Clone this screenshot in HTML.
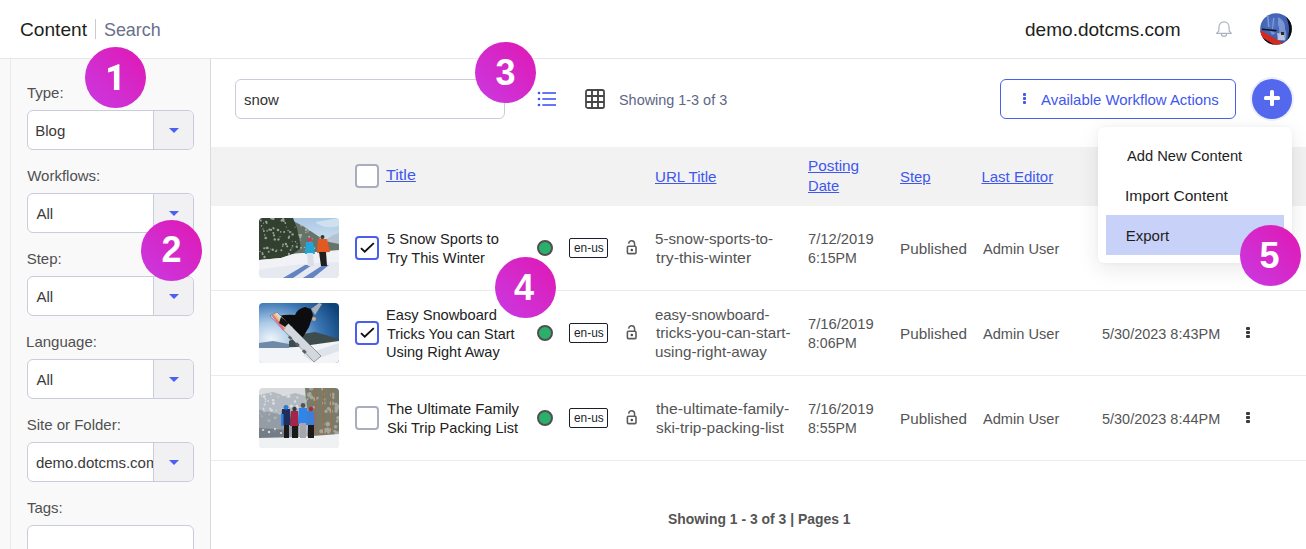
<!DOCTYPE html>
<html><head><meta charset="utf-8"><style>
html,body{margin:0;padding:0;}
body{width:1306px;height:549px;overflow:hidden;position:relative;background:#fff;font-family:"Liberation Sans", sans-serif;}
.t{position:absolute;white-space:nowrap;transform-origin:0 0;}
svg{display:block}
.bd{position:absolute;width:61px;height:61px;border-radius:50%;background:linear-gradient(45deg,#c93ae2 0%,#e018b3 100%);color:#fff;font-weight:bold;font-size:36px;line-height:61px;text-align:center}
.bd span{display:block;position:relative}
</style></head><body>
<div style="position:absolute;left:0px;top:0px;width:1306px;height:58px;background:#fff"></div>
<div style="position:absolute;left:0px;top:58px;width:1306px;height:1px;background:#e6e7ec"></div>
<div class="t" style="left:19.69px;top:17.22px;font-size:19px;line-height:25px;color:#1e1e20;transform:scaleX(1.0065);">Content</div>
<div style="position:absolute;left:95px;top:19px;width:1px;height:20px;background:#c9cbd3"></div>
<div class="t" style="left:103.78px;top:17.22px;font-size:19px;line-height:25px;color:#68708a;transform:scaleX(0.9411);">Search</div>
<div class="t" style="left:1024.65px;top:16.52px;font-size:19px;line-height:25px;color:#1e1e20;transform:scaleX(1.0023);">demo.dotcms.com</div>
<svg style="position:absolute;left:1214px;top:20px" width="20" height="19" viewBox="0 0 20 19">
<path d="M2.6 13.4 L4.9 10.8 V7.6 C4.9 4.1 7.1 1.9 10 1.9 C12.9 1.9 15.1 4.1 15.1 7.6 V10.8 L17.4 13.4 Z" fill="none" stroke="#aeb3c3" stroke-width="1.2" stroke-linejoin="round"/>
<path d="M7.4 13.8 A2.6 2.6 0 0 0 12.6 13.8" fill="none" stroke="#aeb3c3" stroke-width="1.2"/>
</svg>
<svg style="position:absolute;left:1260px;top:13px" width="32" height="32" viewBox="0 0 32 32">
<defs><clipPath id="av"><circle cx="16" cy="16" r="15.8"/></clipPath>
<radialGradient id="avg" cx="0.4" cy="0.35" r="0.8"><stop offset="0" stop-color="#5274c4"/><stop offset=".7" stop-color="#3a5aaa"/><stop offset="1" stop-color="#2a4488"/></radialGradient></defs>
<g clip-path="url(#av)">
<rect width="32" height="32" fill="url(#avg)"/>
<g fill="#a9bde6" opacity=".55"><path d="M7 3 L8.5 3 L9.5 14 L8 14Z"/><path d="M13 5 L14.5 5 L13 16 L12 16Z"/><path d="M10 18 L16 20 L12 22Z"/></g>
<path d="M18 4 Q26 8 25 16 Q28 22 25 28 L17 27 Q21 19 18 11Z" fill="#9fb4e2" opacity=".6"/>
<path d="M17 20 L24 21 L25 27 L18 27Z" fill="#c9d2e2" opacity=".8"/>
<path d="M21 19 L24 19 L24 22 L21 22Z" fill="#2a2a2a"/>
<path d="M2 15.5 L17 17 L16 18.5 L2 17Z" fill="#121212"/>
<path d="M0 17 L23 30 L21 33 L16 33 L0 23Z" fill="#d52a1b"/>
<path d="M0 23 L16 33 L0 33Z" fill="#160808"/>
<path d="M24 0 Q33 14 26 32 L32 32 L32 0Z" fill="#0b0b0e"/>
</g>
</svg>
<div style="position:absolute;left:0px;top:59px;width:10px;height:490px;background:#f9f9f9"></div>
<div style="position:absolute;left:10px;top:59px;width:1px;height:490px;background:#eaeaec"></div>
<div style="position:absolute;left:11px;top:59px;width:199px;height:490px;background:#f9f9fa"></div>
<div style="position:absolute;left:210px;top:59px;width:1px;height:490px;background:#d9dbe3"></div>
<div class="t" style="left:26.93px;top:82.80px;font-size:15px;line-height:20px;color:#505050;">Type:</div>
<div style="position:absolute;left:27px;top:110px;width:167px;height:40px;box-sizing:border-box;border:1px solid #c9ccda;border-radius:6px;background:#fff;overflow:hidden"><div style="position:absolute;left:125px;top:0;width:41px;height:38px;background:#f1f1f3;border-left:1px solid #c9ccda"></div><div style="position:absolute;left:141px;top:17px;width:0;height:0;border-left:5px solid transparent;border-right:5px solid transparent;border-top:5px solid #4c5ff0"></div></div>
<div class="t" style="left:35.25px;top:120.80px;font-size:15px;line-height:20px;color:#3a3a3a;">Blog</div>
<div class="t" style="left:27.18px;top:165.80px;font-size:15px;line-height:20px;color:#505050;">Workflows:</div>
<div style="position:absolute;left:27px;top:193px;width:167px;height:40px;box-sizing:border-box;border:1px solid #c9ccda;border-radius:6px;background:#fff;overflow:hidden"><div style="position:absolute;left:125px;top:0;width:41px;height:38px;background:#f1f1f3;border-left:1px solid #c9ccda"></div><div style="position:absolute;left:141px;top:17px;width:0;height:0;border-left:5px solid transparent;border-right:5px solid transparent;border-top:5px solid #4c5ff0"></div></div>
<div class="t" style="left:36.50px;top:203.80px;font-size:15px;line-height:20px;color:#3a3a3a;">All</div>
<div class="t" style="left:26.68px;top:248.80px;font-size:15px;line-height:20px;color:#505050;">Step:</div>
<div style="position:absolute;left:27px;top:276px;width:167px;height:40px;box-sizing:border-box;border:1px solid #c9ccda;border-radius:6px;background:#fff;overflow:hidden"><div style="position:absolute;left:125px;top:0;width:41px;height:38px;background:#f1f1f3;border-left:1px solid #c9ccda"></div><div style="position:absolute;left:141px;top:17px;width:0;height:0;border-left:5px solid transparent;border-right:5px solid transparent;border-top:5px solid #4c5ff0"></div></div>
<div class="t" style="left:36.50px;top:286.80px;font-size:15px;line-height:20px;color:#3a3a3a;">All</div>
<div class="t" style="left:26.05px;top:331.80px;font-size:15px;line-height:20px;color:#505050;">Language:</div>
<div style="position:absolute;left:27px;top:359px;width:167px;height:40px;box-sizing:border-box;border:1px solid #c9ccda;border-radius:6px;background:#fff;overflow:hidden"><div style="position:absolute;left:125px;top:0;width:41px;height:38px;background:#f1f1f3;border-left:1px solid #c9ccda"></div><div style="position:absolute;left:141px;top:17px;width:0;height:0;border-left:5px solid transparent;border-right:5px solid transparent;border-top:5px solid #4c5ff0"></div></div>
<div class="t" style="left:36.50px;top:369.80px;font-size:15px;line-height:20px;color:#3a3a3a;">All</div>
<div class="t" style="left:26.68px;top:414.80px;font-size:15px;line-height:20px;color:#505050;">Site or Folder:</div>
<div style="position:absolute;left:27px;top:442px;width:167px;height:40px;box-sizing:border-box;border:1px solid #c9ccda;border-radius:6px;background:#fff;overflow:hidden"><div style="position:absolute;left:125px;top:0;width:41px;height:38px;background:#f1f1f3;border-left:1px solid #c9ccda"></div><div style="position:absolute;left:141px;top:17px;width:0;height:0;border-left:5px solid transparent;border-right:5px solid transparent;border-top:5px solid #4c5ff0"></div></div>
<div style="position:absolute;left:28px;top:443px;width:125px;height:38px;overflow:hidden">
<div class="t" style="left:7.88px;top:9.80px;font-size:15px;line-height:20px;color:#3a3a3a;">demo.dotcms.com</div>
</div>
<div class="t" style="left:26.93px;top:497.80px;font-size:15px;line-height:20px;color:#505050;">Tags:</div>
<div style="position:absolute;left:27px;top:525px;width:167px;height:40px;box-sizing:border-box;border:1px solid #c9ccda;border-radius:6px;background:#fff"></div>
<div style="position:absolute;left:235px;top:79px;width:270px;height:40px;box-sizing:border-box;border:1px solid #c9ccda;border-radius:6px;background:#fff"></div>
<div class="t" style="left:243.93px;top:90.00px;font-size:15px;line-height:20px;color:#333;transform:scaleX(0.9964);">snow</div>
<svg style="position:absolute;left:536px;top:90px" width="22" height="18" viewBox="0 0 22 18">
<g fill="#3d58ef"><circle cx="3" cy="3" r="1.35"/><circle cx="3" cy="9" r="1.35"/><circle cx="3" cy="15" r="1.35"/>
<rect x="6.3" y="2.2" width="13.7" height="1.6"/><rect x="6.3" y="8.2" width="13.7" height="1.6"/><rect x="6.3" y="14.2" width="13.7" height="1.6"/></g></svg>
<svg style="position:absolute;left:584px;top:88px" width="22" height="22" viewBox="0 0 22 22">
<rect x="2" y="2" width="18" height="18" rx="1.8" fill="none" stroke="#474747" stroke-width="1.8"/>
<path d="M8 2V20M14 2V20M2 8H20M2 14H20" stroke="#474747" stroke-width="1.9"/></svg>
<div class="t" style="left:619.00px;top:89.70px;font-size:15px;line-height:20px;color:#5d6684;transform:scaleX(0.9607);">Showing 1-3 of 3</div>
<div style="position:absolute;left:1000px;top:79px;width:236px;height:40px;box-sizing:border-box;border:1px solid #4a5fef;border-radius:6px;background:#fff"></div>
<div style="position:absolute;left:1023px;top:93px;width:3px;height:3px;background:#3f57ee;border-radius:1px"></div>
<div style="position:absolute;left:1023px;top:97px;width:3px;height:3px;background:#3f57ee;border-radius:1px"></div>
<div style="position:absolute;left:1023px;top:101px;width:3px;height:3px;background:#3f57ee;border-radius:1px"></div>
<div class="t" style="left:1040.80px;top:89.80px;font-size:15px;line-height:20px;color:#3f57ee;transform:scaleX(0.9952);">Available Workflow Actions</div>
<div style="position:absolute;left:1252px;top:79px;width:40px;height:40px;box-sizing:border-box;border-radius:50%;background:#5468ee;box-shadow:0 0 0 2px #eceffd"></div>
<div style="position:absolute;left:1264.2px;top:96px;width:15.7px;height:4.4px;background:#fff;border-radius:1.5px"></div>
<div style="position:absolute;left:1269.8px;top:90.3px;width:4.4px;height:15.7px;background:#fff;border-radius:1.5px"></div>
<div style="position:absolute;left:211px;top:147px;width:1095px;height:59px;background:#f2f2f3"></div>
<div style="position:absolute;left:355px;top:164px;width:24px;height:24px;box-sizing:border-box;border:2px solid #a9aebe;border-radius:4px;background:#fff"></div>
<div class="t" style="left:385.60px;top:164.80px;font-size:15px;line-height:20px;color:#3f57ee;transform:scaleX(1.0753);text-decoration:underline;text-underline-offset:1px;">Title</div>
<div class="t" style="left:654.67px;top:166.80px;font-size:15px;line-height:20px;color:#3f57ee;transform:scaleX(1.0055);text-decoration:underline;text-underline-offset:1px;">URL Title</div>
<div class="t" style="left:808.12px;top:156.20px;font-size:15px;line-height:20px;color:#3f57ee;transform:scaleX(1.0214);text-decoration:underline;text-underline-offset:1px;">Posting</div>
<div class="t" style="left:808.17px;top:175.50px;font-size:15px;line-height:20px;color:#3f57ee;transform:scaleX(0.9841);text-decoration:underline;text-underline-offset:1px;">Date</div>
<div class="t" style="left:899.78px;top:166.80px;font-size:15px;line-height:20px;color:#3f57ee;transform:scaleX(0.9924);text-decoration:underline;text-underline-offset:1px;">Step</div>
<div class="t" style="left:981.45px;top:166.80px;font-size:15px;line-height:20px;color:#3f57ee;text-decoration:underline;text-underline-offset:1px;">Last Editor</div>
<div style="position:absolute;left:211px;top:290px;width:1095px;height:1px;background:#ebebee"></div>
<div style="position:absolute;left:259px;top:218px;width:80px;height:60px;border-radius:4px;overflow:hidden"><svg width="80" height="60" viewBox="0 0 80 60">
<defs><linearGradient id="s1" x1="0" y1="0" x2="0" y2="1"><stop offset="0" stop-color="#a9c8e5"/><stop offset="1" stop-color="#dfe9f2"/></linearGradient></defs>
<rect width="80" height="60" fill="#eceef2"/>
<rect x="0" y="0" width="80" height="34" fill="url(#s1)"/>
<path d="M80 8 Q66 12 56 4 L80 0Z" fill="#cfe0ee"/>
<path d="M66 22 L74 17 L80 15 L80 32 L62 32Z" fill="#b5c3d0"/>
<path d="M28 0 L36 4 L44 8 L50 12 L56 16 L62 20 L70 24 L80 26 L80 33 L30 36Z" fill="#66746a"/>
<path d="M0 0 H34 L38 10 L40 20 L42 30 L34 36 L22 40 L0 42Z" fill="#33412f"/>
<g fill="#c5cfc6" opacity=".7"><circle cx="19.0" cy="21.8" r="0.8"/><circle cx="48.3" cy="25.0" r="0.6"/><circle cx="1.1" cy="33.5" r="0.7"/><circle cx="38.1" cy="25.6" r="0.6"/><circle cx="41.9" cy="29.7" r="1.0"/><circle cx="5.1" cy="30.3" r="1.0"/><circle cx="24.1" cy="1.2" r="1.2"/><circle cx="37.8" cy="28.8" r="1.2"/><circle cx="31.6" cy="32.0" r="0.9"/><circle cx="7.8" cy="5.4" r="0.7"/><circle cx="50.1" cy="12.0" r="0.9"/><circle cx="30.9" cy="14.0" r="1.0"/><circle cx="72.4" cy="22.8" r="1.1"/><circle cx="16.9" cy="33.3" r="1.0"/><circle cx="22.8" cy="2.5" r="1.2"/><circle cx="12.1" cy="11.8" r="1.1"/><circle cx="24.8" cy="3.1" r="1.0"/><circle cx="2.5" cy="7.9" r="0.8"/><circle cx="3.4" cy="34.7" r="0.8"/><circle cx="30.2" cy="18.4" r="0.9"/><circle cx="51.5" cy="23.8" r="0.9"/><circle cx="40.6" cy="17.2" r="1.1"/><circle cx="19.0" cy="12.0" r="1.3"/><circle cx="41.7" cy="21.9" r="0.5"/><circle cx="33.2" cy="23.2" r="0.5"/><circle cx="49.3" cy="25.3" r="0.5"/><circle cx="50.2" cy="18.7" r="1.0"/><circle cx="28.2" cy="28.3" r="1.1"/><circle cx="1.8" cy="2.4" r="1.0"/><circle cx="36.5" cy="23.7" r="0.8"/><circle cx="29.1" cy="12.5" r="0.8"/><circle cx="47.6" cy="12.0" r="0.8"/><circle cx="45.5" cy="29.4" r="0.7"/><circle cx="17.8" cy="32.2" r="0.7"/><circle cx="15.0" cy="17.4" r="1.1"/><circle cx="8.1" cy="12.9" r="0.8"/><circle cx="26.9" cy="26.0" r="1.2"/><circle cx="36.1" cy="9.0" r="0.6"/><circle cx="42.4" cy="7.6" r="1.1"/><circle cx="22.3" cy="32.3" r="1.0"/><circle cx="10.4" cy="11.7" r="1.1"/><circle cx="21.7" cy="13.9" r="0.8"/><circle cx="33.6" cy="16.4" r="1.2"/><circle cx="12.5" cy="0.2" r="1.3"/><circle cx="53.0" cy="20.8" r="0.7"/><circle cx="27.3" cy="9.1" r="0.6"/><circle cx="47.1" cy="11.5" r="1.1"/><circle cx="3.6" cy="36.1" r="1.1"/><circle cx="72.0" cy="23.1" r="0.5"/><circle cx="24.0" cy="26.5" r="0.9"/><circle cx="49.0" cy="13.7" r="0.7"/><circle cx="15.8" cy="21.4" r="1.2"/><circle cx="13.7" cy="31.7" r="1.2"/><circle cx="64.5" cy="32.9" r="0.5"/><circle cx="4.0" cy="10.9" r="0.7"/><circle cx="42.2" cy="16.9" r="0.9"/><circle cx="4.4" cy="5.1" r="0.6"/><circle cx="5.5" cy="39.0" r="1.2"/><circle cx="6.9" cy="20.1" r="0.8"/><circle cx="25.2" cy="14.1" r="1.0"/><circle cx="46.9" cy="14.4" r="0.7"/><circle cx="26.3" cy="5.0" r="0.9"/><circle cx="57.3" cy="15.2" r="0.6"/><circle cx="14.3" cy="14.9" r="1.0"/><circle cx="64.1" cy="24.9" r="0.8"/><circle cx="29.8" cy="19.8" r="1.1"/><circle cx="33.6" cy="27.8" r="0.9"/><circle cx="19.6" cy="21.4" r="1.1"/><circle cx="5.7" cy="17.0" r="0.8"/><circle cx="29.9" cy="35.9" r="1.1"/><circle cx="21.0" cy="18.6" r="0.6"/><circle cx="65.1" cy="26.5" r="1.2"/><circle cx="63.4" cy="26.7" r="1.1"/><circle cx="11.5" cy="31.0" r="0.5"/><circle cx="7.3" cy="4.0" r="1.2"/><circle cx="14.3" cy="0.9" r="1.2"/><circle cx="9.7" cy="33.8" r="1.0"/><circle cx="46.3" cy="31.9" r="0.5"/><circle cx="61.4" cy="20.5" r="1.1"/><circle cx="8.5" cy="30.0" r="1.2"/><circle cx="4.9" cy="13.0" r="1.0"/><circle cx="14.4" cy="10.0" r="1.0"/><circle cx="60.3" cy="15.7" r="0.8"/><circle cx="31.7" cy="14.0" r="0.8"/><circle cx="6.7" cy="20.0" r="1.3"/><circle cx="33.0" cy="29.9" r="0.6"/><circle cx="55.3" cy="30.2" r="1.0"/><circle cx="41.4" cy="19.3" r="1.0"/><circle cx="7.7" cy="29.9" r="1.2"/><circle cx="41.4" cy="17.7" r="1.1"/><circle cx="14.9" cy="10.7" r="0.7"/><circle cx="46.8" cy="12.6" r="0.7"/><circle cx="23.7" cy="28.2" r="0.8"/><circle cx="68.3" cy="23.4" r="0.7"/></g>
<path d="M0 42 L22 40 L34 36 L80 32 L80 60 L0 60Z" fill="#f0f2f6"/>
<path d="M0 52 Q30 46 80 44 L80 60 L0 60Z" fill="#e6e9ef"/>
<path d="M24 60 L46 47 L53 47 L34 60Z" fill="#6483c2"/>
<path d="M44 60 L64 47 L70 47 L54 60Z" fill="#6483c2"/>
<path d="M47 24 L54 24 L56 36 L46 36Z" fill="#20a7d8"/>
<path d="M48 35 L54 35 L55 48 L49 48Z" fill="#d9dee8"/>
<circle cx="51" cy="21.8" r="2" fill="#d8345a"/>
<path d="M59 21 L68 21 L71 34 L58 35Z" fill="#e25a22"/>
<path d="M60 34 L67 34 L68 48 L62 48Z" fill="#1f1f1f"/>
<circle cx="63.5" cy="19" r="2" fill="#3a3a3a"/>
</svg></div>
<div style="position:absolute;left:355px;top:236px;width:24px;height:24px;box-sizing:border-box;border:2px solid #4a5ff0;border-radius:4px;background:#fff"></div>
<svg style="position:absolute;left:355px;top:236px" width="24" height="24" viewBox="0 0 24 24"><path d="M6 12.1 L9.7 15.6 L18.8 7.1" fill="none" stroke="#111" stroke-width="1.9"/></svg>
<div class="t" style="left:386.79px;top:228.60px;font-size:15px;line-height:20px;color:#222;transform:scaleX(0.9788);">5 Snow Sports to</div>
<div class="t" style="left:387.04px;top:247.50px;font-size:15px;line-height:20px;color:#222;transform:scaleX(0.9716);">Try This Winter</div>
<div style="position:absolute;left:537px;top:240px;width:16px;height:16px;box-sizing:border-box;border-radius:50%;background:#2ab06a;border:2px solid #505050"></div>
<div style="position:absolute;left:569px;top:238px;width:39px;height:20px;box-sizing:border-box;border:1.3px solid #1b1f2b;border-radius:2px;background:#fff"></div>
<div class="t" style="left:574.04px;top:238.80px;font-size:13px;line-height:17px;color:#1b1f2b;transform:scaleX(0.9143);">en-us</div>
<svg style="position:absolute;left:624px;top:239px" width="15" height="18" viewBox="0 0 15 18">
<rect x="3.4" y="7.2" width="8.6" height="7.4" rx="1.1" fill="none" stroke="#5c5c5c" stroke-width="1.6"/>
<path d="M4.6 4.6 C4.9 2.7 6.1 1.7 7.7 1.7 C9.5 1.7 10.6 3 10.6 5 V7.4" fill="none" stroke="#5c5c5c" stroke-width="1.5"/>
<circle cx="7.8" cy="11" r="1.25" fill="#444"/></svg>
<div class="t" style="left:655.37px;top:228.70px;font-size:15px;line-height:20px;color:#545454;transform:scaleX(1.0121);">5-snow-sports-to-</div>
<div class="t" style="left:655.74px;top:247.70px;font-size:15px;line-height:20px;color:#545454;transform:scaleX(1.0581);">try-this-winter</div>
<div class="t" style="left:807.86px;top:229.10px;font-size:15px;line-height:20px;color:#545454;transform:scaleX(0.9854);">7/12/2019</div>
<div class="t" style="left:807.89px;top:248.00px;font-size:15px;line-height:20px;color:#545454;transform:scaleX(0.9447);">6:15PM</div>
<div class="t" style="left:899.53px;top:238.80px;font-size:15px;line-height:20px;color:#545454;transform:scaleX(1.0169);">Published</div>
<div class="t" style="left:982.70px;top:238.80px;font-size:15px;line-height:20px;color:#545454;transform:scaleX(0.9741);">Admin User</div>
<div style="position:absolute;left:211px;top:375px;width:1095px;height:1px;background:#ebebee"></div>
<div style="position:absolute;left:259px;top:303px;width:80px;height:60px;border-radius:4px;overflow:hidden"><svg width="80" height="60" viewBox="0 0 80 60">
<defs><radialGradient id="sk2" cx="0.15" cy="0.6" r="0.95"><stop offset="0" stop-color="#eef4f9"/><stop offset=".3" stop-color="#a9c9e6"/><stop offset=".65" stop-color="#3d78b6"/><stop offset="1" stop-color="#0c4379"/></radialGradient></defs>
<rect width="80" height="60" fill="url(#sk2)"/>
<path d="M30 38 L44 31 L56 29 L70 33 L80 36 L80 44 L30 44Z" fill="#3e4c4e"/>
<path d="M0 40 L14 38 L30 41 L30 46 L0 46Z" fill="#6f8aa6"/>
<path d="M0 45 L30 45 L80 38 L80 60 L0 60Z" fill="#f2f4f7"/>
<path d="M44 52 L80 40 L80 48 L52 58Z" fill="#dfe4ea"/>
<path d="M20 13 Q28 11 36 12 Q38 6 46 4 L52 6 L54 12 L50 24 L44 34 L36 37 L32 32 L34 24 L28 22 L20 21Z" fill="#0d0d10"/>
<path d="M52 6 L60 0 L63 1 L56 12Z" fill="#a8b0ba"/>
<circle cx="55" cy="16" r="2" fill="#d8a880"/>
<path d="M11 13 L18 9 L62 53 L55 59Z" fill="#d3d8df" stroke="#5d6670" stroke-width=".6"/>
<path d="M12.5 12.5 L14.5 11.5 L26 26 L23.5 27.5Z" fill="#e26f96"/>
<path d="M14.5 11.5 L16 11 L27 24.5 L26 26Z" fill="#f2c24a"/>
<g fill="#5a5f66"><rect x="30" y="33" width="2.5" height="4" transform="rotate(-45 31 35)"/><rect x="37" y="40" width="3" height="4" transform="rotate(-45 38 42)"/><rect x="44" y="47" width="3" height="4" transform="rotate(-45 45 49)"/></g>
<path d="M22 14 L30 20 L26 24 L20 20Z" fill="#141416"/>
</svg></div>
<div style="position:absolute;left:355px;top:321px;width:24px;height:24px;box-sizing:border-box;border:2px solid #4a5ff0;border-radius:4px;background:#fff"></div>
<svg style="position:absolute;left:355px;top:321px" width="24" height="24" viewBox="0 0 24 24"><path d="M6 12.1 L9.7 15.6 L18.8 7.1" fill="none" stroke="#111" stroke-width="1.9"/></svg>
<div class="t" style="left:386.18px;top:304.70px;font-size:15px;line-height:20px;color:#222;transform:scaleX(0.9773);">Easy Snowboard</div>
<div class="t" style="left:387.04px;top:323.60px;font-size:15px;line-height:20px;color:#222;transform:scaleX(0.9594);">Tricks You can Start</div>
<div class="t" style="left:386.31px;top:342.20px;font-size:15px;line-height:20px;color:#222;transform:scaleX(0.9696);">Using Right Away</div>
<div style="position:absolute;left:537px;top:325px;width:16px;height:16px;box-sizing:border-box;border-radius:50%;background:#2ab06a;border:2px solid #505050"></div>
<div style="position:absolute;left:569px;top:323px;width:39px;height:20px;box-sizing:border-box;border:1.3px solid #1b1f2b;border-radius:2px;background:#fff"></div>
<div class="t" style="left:574.04px;top:323.80px;font-size:13px;line-height:17px;color:#1b1f2b;transform:scaleX(0.9143);">en-us</div>
<svg style="position:absolute;left:624px;top:324px" width="15" height="18" viewBox="0 0 15 18">
<rect x="3.4" y="7.2" width="8.6" height="7.4" rx="1.1" fill="none" stroke="#5c5c5c" stroke-width="1.6"/>
<path d="M4.6 4.6 C4.9 2.7 6.1 1.7 7.7 1.7 C9.5 1.7 10.6 3 10.6 5 V7.4" fill="none" stroke="#5c5c5c" stroke-width="1.5"/>
<circle cx="7.8" cy="11" r="1.25" fill="#444"/></svg>
<div class="t" style="left:655.38px;top:304.70px;font-size:15px;line-height:20px;color:#545454;transform:scaleX(0.9960);">easy-snowboard-</div>
<div class="t" style="left:655.75px;top:323.30px;font-size:15px;line-height:20px;color:#545454;transform:scaleX(1.0158);">tricks-you-can-start-</div>
<div class="t" style="left:654.98px;top:341.60px;font-size:15px;line-height:20px;color:#545454;transform:scaleX(1.0156);">using-right-away</div>
<div class="t" style="left:807.86px;top:314.10px;font-size:15px;line-height:20px;color:#545454;transform:scaleX(0.9854);">7/16/2019</div>
<div class="t" style="left:808.01px;top:333.00px;font-size:15px;line-height:20px;color:#545454;transform:scaleX(0.9424);">8:06PM</div>
<div class="t" style="left:899.53px;top:323.80px;font-size:15px;line-height:20px;color:#545454;transform:scaleX(1.0169);">Published</div>
<div class="t" style="left:982.70px;top:323.80px;font-size:15px;line-height:20px;color:#545454;transform:scaleX(0.9741);">Admin User</div>
<div class="t" style="left:1102.10px;top:323.80px;font-size:15px;line-height:20px;color:#545454;transform:scaleX(0.9640);">5/30/2023 8:43PM</div>
<div style="position:absolute;left:1246.4px;top:327px;width:3.3px;height:3px;background:#3a3a3a;border-radius:1px"></div>
<div style="position:absolute;left:1246.4px;top:331px;width:3.3px;height:3px;background:#3a3a3a;border-radius:1px"></div>
<div style="position:absolute;left:1246.4px;top:335px;width:3.3px;height:3px;background:#3a3a3a;border-radius:1px"></div>
<div style="position:absolute;left:211px;top:460px;width:1095px;height:1px;background:#ebebee"></div>
<div style="position:absolute;left:259px;top:388px;width:80px;height:60px;border-radius:4px;overflow:hidden"><svg width="80" height="60" viewBox="0 0 80 60">
<rect width="80" height="60" fill="#d9dbdd"/>
<path d="M0 7 L14 4 L26 8 L36 5 L50 9 L80 7 L80 50 L0 50Z" fill="#b3bac1"/>
<g fill="#e4e8eb" opacity=".8"><circle cx="14.2" cy="12.3" r="1.3"/><circle cx="3.2" cy="28.5" r="1.0"/><circle cx="2.6" cy="27.3" r="0.6"/><circle cx="19.1" cy="8.9" r="0.7"/><circle cx="18.7" cy="40.7" r="0.7"/><circle cx="9.8" cy="32.4" r="1.5"/><circle cx="25.4" cy="22.7" r="1.6"/><circle cx="2.0" cy="42.1" r="0.9"/><circle cx="6.3" cy="10.9" r="0.9"/><circle cx="35.9" cy="13.6" r="1.2"/><circle cx="28.1" cy="21.6" r="1.1"/><circle cx="2.8" cy="8.5" r="0.8"/><circle cx="29.9" cy="24.0" r="0.9"/><circle cx="25.8" cy="25.0" r="0.9"/><circle cx="35.0" cy="35.4" r="0.8"/><circle cx="25.3" cy="28.1" r="1.5"/><circle cx="32.1" cy="18.1" r="1.6"/><circle cx="5.2" cy="23.6" r="1.4"/><circle cx="6.7" cy="26.5" r="0.6"/><circle cx="29.4" cy="38.1" r="1.2"/><circle cx="38.5" cy="19.2" r="1.3"/><circle cx="26.2" cy="30.4" r="1.1"/><circle cx="37.0" cy="45.7" r="1.1"/><circle cx="29.2" cy="8.5" r="1.3"/><circle cx="28.5" cy="47.7" r="1.4"/><circle cx="12.5" cy="22.2" r="1.3"/><circle cx="1.0" cy="25.4" r="0.8"/><circle cx="5.2" cy="8.5" r="1.4"/><circle cx="5.7" cy="16.4" r="1.0"/><circle cx="38.3" cy="9.4" r="1.0"/><circle cx="24.2" cy="43.1" r="1.4"/><circle cx="38.0" cy="17.7" r="1.0"/><circle cx="15.8" cy="43.1" r="1.6"/><circle cx="6.6" cy="13.4" r="0.8"/><circle cx="10.3" cy="26.4" r="1.2"/><circle cx="11.6" cy="6.2" r="1.0"/><circle cx="16.2" cy="29.8" r="1.6"/><circle cx="30.4" cy="27.7" r="1.2"/><circle cx="29.8" cy="8.3" r="1.5"/><circle cx="34.3" cy="42.7" r="1.4"/><circle cx="17.3" cy="22.8" r="0.7"/><circle cx="27.9" cy="8.6" r="0.7"/><circle cx="9.2" cy="12.8" r="0.9"/><circle cx="2.3" cy="6.0" r="0.8"/><circle cx="4.5" cy="21.3" r="0.6"/><circle cx="38.5" cy="31.8" r="0.7"/><circle cx="11.1" cy="20.6" r="1.0"/><circle cx="5.4" cy="41.7" r="1.6"/><circle cx="20.5" cy="26.3" r="0.7"/><circle cx="4.5" cy="20.4" r="0.9"/><circle cx="36.5" cy="12.8" r="0.6"/><circle cx="41.8" cy="28.2" r="0.7"/><circle cx="23.9" cy="7.1" r="1.1"/><circle cx="43.1" cy="42.3" r="1.3"/><circle cx="11.5" cy="21.4" r="0.8"/><circle cx="34.0" cy="28.4" r="1.4"/><circle cx="14.5" cy="15.4" r="1.4"/><circle cx="43.3" cy="41.8" r="1.4"/><circle cx="36.0" cy="37.1" r="0.8"/><circle cx="22.8" cy="20.9" r="0.6"/></g>
<path d="M0 22 L20 26 L40 32 L40 50 L0 50Z" fill="#6f7984" opacity=".45"/>
<path d="M0 40 L30 42 L30 50 L0 50Z" fill="#59616a" opacity=".55"/>
<g fill="#e8ebee" opacity=".9"><circle cx="4" cy="42" r="1"/><circle cx="10" cy="44" r="1.2"/><circle cx="16" cy="41" r="1"/><circle cx="22" cy="45" r="1.1"/></g>
<path d="M46 0 L80 0 L80 50 L48 50 L50 30 L47 12Z" fill="#7b7d6c"/>
<g fill="#c6cacb" opacity=".55"><circle cx="46.9" cy="12.9" r="1.4"/><circle cx="69.5" cy="44.0" r="1.7"/><circle cx="77.9" cy="45.4" r="2.4"/><circle cx="58.4" cy="10.1" r="1.3"/><circle cx="52.7" cy="9.4" r="1.9"/><circle cx="76.6" cy="38.7" r="1.7"/><circle cx="68.2" cy="36.8" r="1.1"/><circle cx="68.5" cy="41.8" r="2.2"/><circle cx="71.5" cy="22.0" r="1.3"/><circle cx="72.8" cy="15.3" r="2.2"/><circle cx="79.0" cy="18.2" r="1.6"/><circle cx="78.2" cy="33.3" r="1.3"/><circle cx="50.3" cy="7.0" r="2.4"/><circle cx="73.4" cy="6.7" r="2.2"/><circle cx="79.3" cy="30.2" r="1.5"/><circle cx="64.7" cy="6.0" r="1.0"/><circle cx="79.0" cy="29.9" r="1.8"/><circle cx="77.7" cy="20.0" r="2.3"/><circle cx="74.1" cy="9.7" r="1.4"/><circle cx="56.0" cy="11.1" r="1.9"/><circle cx="54.8" cy="19.3" r="1.2"/><circle cx="76.9" cy="16.3" r="1.7"/><circle cx="65.8" cy="41.6" r="1.6"/><circle cx="77.2" cy="23.1" r="1.8"/><circle cx="63.8" cy="0.9" r="1.7"/><circle cx="52.2" cy="0.2" r="2.2"/><circle cx="51.9" cy="21.8" r="2.1"/><circle cx="64.9" cy="15.0" r="1.8"/><circle cx="64.9" cy="36.1" r="1.2"/><circle cx="65.1" cy="11.4" r="1.4"/><circle cx="72.3" cy="23.4" r="1.8"/><circle cx="71.8" cy="42.0" r="1.7"/><circle cx="66.8" cy="23.3" r="1.8"/><circle cx="69.6" cy="20.8" r="1.8"/><circle cx="62.3" cy="43.3" r="2.0"/><circle cx="75.8" cy="43.3" r="1.4"/><circle cx="65.0" cy="43.4" r="2.3"/><circle cx="50.7" cy="5.6" r="1.7"/><circle cx="48.5" cy="11.1" r="1.1"/><circle cx="68.8" cy="36.1" r="2.3"/></g>
<g fill="#a36a44"><rect x="56" y="0" width="1.4" height="50"/><rect x="64" y="0" width="1.4" height="50"/><rect x="72" y="0" width="1.2" height="46"/></g>
<path d="M0 50 L40 49 L80 46 L80 60 L0 60Z" fill="#eff1f3"/>
<path d="M23 21 L31 21 L32 37 L22 37Z" fill="#1f2f5c"/><rect x="22" y="26" width="2.5" height="12" fill="#2f82e0"/><rect x="25" y="37" width="5" height="13" fill="#1a1a1a"/><circle cx="27" cy="19.3" r="2.4" fill="#2c7bd6"/>
<path d="M32 23 L39 23 L40 38 L31 38Z" fill="#a32648"/><rect x="33" y="38" width="6" height="12" fill="#1a1a1a"/><circle cx="35.5" cy="21" r="2.2" fill="#3b3b3b"/>
<path d="M40 20 L48 20 L50 35 L39 36Z" fill="#2f86e8"/><rect x="41" y="35" width="6" height="15" fill="#a4a8ae"/><circle cx="44" cy="17.5" r="2.4" fill="#555"/>
<path d="M48 23 L55 23 L56 37 L47 37Z" fill="#3c7fd6"/><rect x="49" y="37" width="6" height="13" fill="#1a1a1a"/><circle cx="52" cy="21" r="2.2" fill="#b02a30"/>
</svg></div>
<div style="position:absolute;left:355px;top:406px;width:24px;height:24px;box-sizing:border-box;border:2px solid #a9aebe;border-radius:4px;background:#fff"></div>
<div class="t" style="left:387.03px;top:399.10px;font-size:15px;line-height:20px;color:#222;transform:scaleX(0.9895);">The Ultimate Family</div>
<div class="t" style="left:386.79px;top:417.50px;font-size:15px;line-height:20px;color:#222;transform:scaleX(0.9704);">Ski Trip Packing List</div>
<div style="position:absolute;left:537px;top:410px;width:16px;height:16px;box-sizing:border-box;border-radius:50%;background:#2ab06a;border:2px solid #505050"></div>
<div style="position:absolute;left:569px;top:408px;width:39px;height:20px;box-sizing:border-box;border:1.3px solid #1b1f2b;border-radius:2px;background:#fff"></div>
<div class="t" style="left:574.04px;top:408.80px;font-size:13px;line-height:17px;color:#1b1f2b;transform:scaleX(0.9143);">en-us</div>
<svg style="position:absolute;left:624px;top:409px" width="15" height="18" viewBox="0 0 15 18">
<rect x="3.4" y="7.2" width="8.6" height="7.4" rx="1.1" fill="none" stroke="#5c5c5c" stroke-width="1.6"/>
<path d="M4.6 4.6 C4.9 2.7 6.1 1.7 7.7 1.7 C9.5 1.7 10.6 3 10.6 5 V7.4" fill="none" stroke="#5c5c5c" stroke-width="1.5"/>
<circle cx="7.8" cy="11" r="1.25" fill="#444"/></svg>
<div class="t" style="left:655.74px;top:398.70px;font-size:15px;line-height:20px;color:#545454;transform:scaleX(1.0440);">the-ultimate-family-</div>
<div class="t" style="left:655.61px;top:417.70px;font-size:15px;line-height:20px;color:#545454;transform:scaleX(1.0287);">ski-trip-packing-list</div>
<div class="t" style="left:807.86px;top:399.10px;font-size:15px;line-height:20px;color:#545454;transform:scaleX(0.9854);">7/16/2019</div>
<div class="t" style="left:808.01px;top:418.00px;font-size:15px;line-height:20px;color:#545454;transform:scaleX(0.9424);">8:55PM</div>
<div class="t" style="left:899.53px;top:408.80px;font-size:15px;line-height:20px;color:#545454;transform:scaleX(1.0169);">Published</div>
<div class="t" style="left:982.70px;top:408.80px;font-size:15px;line-height:20px;color:#545454;transform:scaleX(0.9741);">Admin User</div>
<div class="t" style="left:1102.10px;top:408.80px;font-size:15px;line-height:20px;color:#545454;transform:scaleX(0.9640);">5/30/2023 8:44PM</div>
<div style="position:absolute;left:1246.4px;top:412px;width:3.3px;height:3px;background:#3a3a3a;border-radius:1px"></div>
<div style="position:absolute;left:1246.4px;top:416px;width:3.3px;height:3px;background:#3a3a3a;border-radius:1px"></div>
<div style="position:absolute;left:1246.4px;top:420px;width:3.3px;height:3px;background:#3a3a3a;border-radius:1px"></div>
<div class="t" style="left:668.03px;top:509.85px;font-size:14px;line-height:18px;color:#555;font-weight:bold;transform:scaleX(0.9941);">Showing 1 - 3 of 3 | Pages 1</div>
<div style="position:absolute;left:1098px;top:127px;width:194px;height:136px;background:#fff;border-radius:6px;box-shadow:0 6px 22px rgba(0,0,0,.09),0 0 4px rgba(0,0,0,.04)"></div>
<div style="position:absolute;left:1106px;top:215px;width:178px;height:40px;background:#c8d1f7"></div>
<div class="t" style="left:1126.60px;top:145.50px;font-size:15px;line-height:20px;color:#1e1e1e;transform:scaleX(0.9796);">Add New Content</div>
<div class="t" style="left:1125.17px;top:185.60px;font-size:15px;line-height:20px;color:#1e1e1e;transform:scaleX(1.0373);">Import Content</div>
<div class="t" style="left:1125.75px;top:225.80px;font-size:15px;line-height:20px;color:#1e1e1e;">Export</div>
<div class="bd" style="left:85.0px;top:46.8px"><svg width="61" height="61" viewBox="0 0 61 61"><path d="M23 21.2 L33.2 17.3 H34.4 V43.1 H28.9 V24.1 L23 25.4 Z" fill="#fff"/></svg></div>
<div class="bd" style="left:140.9px;top:220.0px"><span style="left:0px;top:-1px">2</span></div>
<div class="bd" style="left:475.1px;top:41.8px"><span style="left:0px;top:0px">3</span></div>
<div class="bd" style="left:495.0px;top:256.7px"><span style="left:-1.5px;top:0.5px">4</span></div>
<div class="bd" style="left:1240.1px;top:224.9px"><span style="left:-1px;top:0.5px">5</span></div>
</body></html>
